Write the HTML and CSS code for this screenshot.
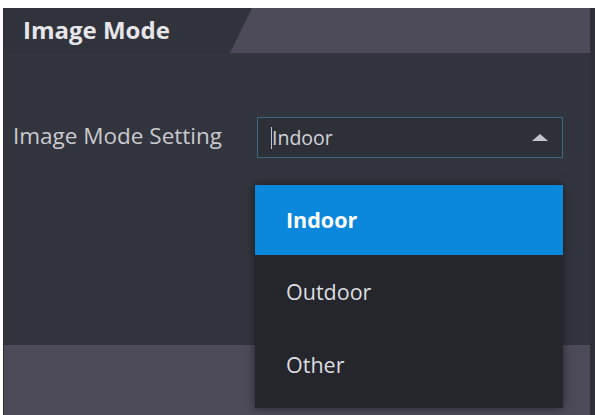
FILE: index.html
```html
<!DOCTYPE html>
<html lang="en">
<head>
    <meta charset="UTF-8">
    <meta name="viewport" content="width=device-width, initial-scale=1.0">
    <title>Image Mode</title>
    <link rel="stylesheet" href="styles.css">
</head>
<body>
    <div class="panel">
        <div class="panel-head">
            <div class="tab">Image Mode</div>
        </div>
        <div class="panel-body">
            <div class="form-row">
                <label class="form-label">Image Mode Setting</label>
                <div class="select-wrap">
                    <div class="select-box">
                        <span class="caret"></span>
                        <span class="select-value">Indoor</span>
                        <span class="arrow-up"></span>
                    </div>
                    <ul class="dropdown">
                        <li class="active">Indoor</li>
                        <li>Outdoor</li>
                        <li>Other</li>
                    </ul>
                </div>
            </div>
        </div>
        <div class="panel-foot"></div>
    </div>
</body>
</html>
```

FILE: styles.css
```css
body {
    margin: 0;
    padding: 8px 0 0 3px;
    background-color: #fff;
    font-family: 'Open Sans', 'Noto Sans', sans-serif;
    overflow: hidden;
}
.panel {
    height: 407px;
    background-color: #33353e;
    border-left: 1px solid #2a2b31;
    border-right: 5px solid #2e2f37;
    display: flex;
    flex-direction: column;
}
.panel-head {
    height: 45px;
    flex-shrink: 0;
    background-color: #4d4b59;
    display: flex;
}
.tab {
    width: 248px;
    background-color: #31333c;
    clip-path: polygon(0 0, 100% 0, calc(100% - 22px) 100%, 0 100%);
    color: #e6e6ea;
    font-size: 24px;
    font-weight: bold;
    line-height: 44px;
    padding-left: 19px;
    box-sizing: border-box;
}
.panel-body {
    height: 292px;
    flex-shrink: 0;
}
.panel-foot {
    flex: 1;
    background-color: #4d4a5a;
}
.form-row {
    display: flex;
    align-items: center;
    margin-top: 64px;
    padding-left: 9px;
}
.form-label {
    width: 244px;
    color: #c9c9ce;
    font-size: 22.5px;
    margin-top: -4px;
}
.select-wrap {
    position: relative;
    width: 306px;
}
.select-box {
    height: 41px;
    box-sizing: border-box;
    border: 1px solid #3b6684;
    background-color: #2e3038;
    display: flex;
    align-items: center;
    padding: 0 14px 0 13px;
}
.caret {
    width: 1px;
    height: 22px;
    background-color: #bfc3cc;
}
.select-value {
    flex: 1;
    color: #d2d3d8;
    font-size: 19.5px;
}
.arrow-up {
    width: 0;
    height: 0;
    border-left: 8px solid transparent;
    border-right: 8px solid transparent;
    border-bottom: 7px solid #c4c6cc;
}
.dropdown {
    position: absolute;
    top: 68px;
    left: -2px;
    width: 308px;
    margin: 0;
    padding: 0 0 7px;
    list-style: none;
    background-color: #24262c;
    box-shadow: 0 0 9px rgba(0, 0, 0, 0.5);
}
.dropdown li {
    height: 70px;
    line-height: 70px;
    padding-left: 31px;
    color: #dcdde0;
    font-size: 21.5px;
}
.dropdown li + li {
    height: 73px;
    line-height: 73px;
}
.dropdown li.active {
    background-color: #0b88dc;
    color: #fff;
    font-weight: bold;
}
```
